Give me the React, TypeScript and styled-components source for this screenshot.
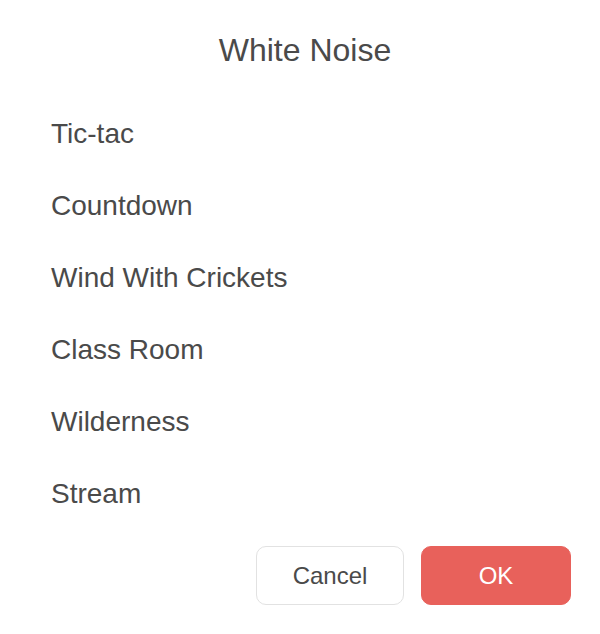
import styled, { createGlobalStyle } from "styled-components";

const GlobalStyle = createGlobalStyle`
  html, body {
    margin: 0;
    padding: 0;
    background: #ffffff;
    font-family: "Liberation Sans", Arial, sans-serif;
  }
`;

const Dialog = styled.div`
  width: 600px;
  height: 634px;
  box-sizing: border-box;
  padding: 30px 29px 0 51px;
  display: flex;
  flex-direction: column;
  background: #ffffff;
  color: #4a4a4a;
`;

const Title = styled.h1`
  margin: 0 0 28px 0;
  padding-right: 12px;
  height: 40px;
  line-height: 40px;
  font-size: 32px;
  font-weight: 400;
  text-align: center;
  color: #4a4a4a;
`;

const SoundList = styled.ul`
  list-style: none;
  margin: 0;
  padding: 0;
  display: flex;
  flex-direction: column;
`;

const SoundItem = styled.li`
  height: 72px;
  display: flex;
  align-items: center;
  font-size: 28px;
  color: #4a4a4a;
  cursor: pointer;
`;

const Actions = styled.div`
  margin-top: 16px;
  display: flex;
  justify-content: flex-end;
  gap: 17px;
`;

const Button = styled.button<{ $primary?: boolean }>`
  width: ${(p) => (p.$primary ? "150px" : "148px")};
  height: 59px;
  box-sizing: border-box;
  border-radius: 10px;
  font-family: "Liberation Sans", Arial, sans-serif;
  font-size: 24px;
  cursor: pointer;
  border: ${(p) => (p.$primary ? "1px solid #e8615b" : "1.5px solid #e2e2e2")};
  background: ${(p) => (p.$primary ? "#e8615b" : "#ffffff")};
  color: ${(p) => (p.$primary ? "#ffffff" : "#4a4a4a")};
`;

const sounds = [
  "Tic-tac",
  "Countdown",
  "Wind With Crickets",
  "Class Room",
  "Wilderness",
  "Stream",
];

const App = () => {
  return (
    <>
      <GlobalStyle />
      <Dialog>
        <Title>White Noise</Title>
        <SoundList>
          {sounds.map((s) => (
            <SoundItem key={s}>{s}</SoundItem>
          ))}
        </SoundList>
        <Actions>
          <Button>Cancel</Button>
          <Button $primary>OK</Button>
        </Actions>
      </Dialog>
    </>
  );
};

export default App;
